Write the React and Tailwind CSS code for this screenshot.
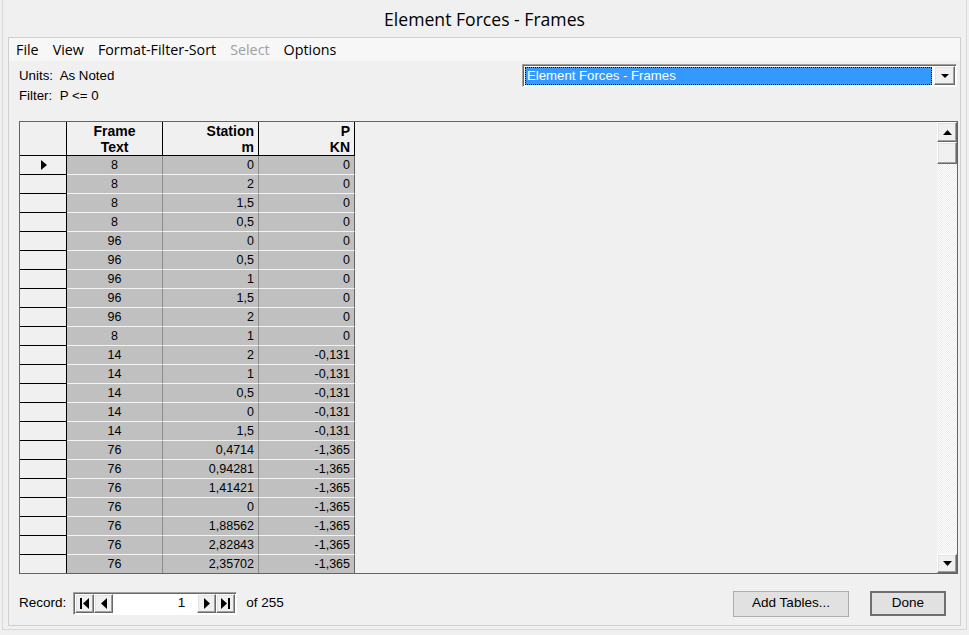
import React from "react";

const rows = [
  ["8", "0", "0"],
  ["8", "2", "0"],
  ["8", "1,5", "0"],
  ["8", "0,5", "0"],
  ["96", "0", "0"],
  ["96", "0,5", "0"],
  ["96", "1", "0"],
  ["96", "1,5", "0"],
  ["96", "2", "0"],
  ["8", "1", "0"],
  ["14", "2", "-0,131"],
  ["14", "1", "-0,131"],
  ["14", "0,5", "-0,131"],
  ["14", "0", "-0,131"],
  ["14", "1,5", "-0,131"],
  ["76", "0,4714", "-1,365"],
  ["76", "0,94281", "-1,365"],
  ["76", "1,41421", "-1,365"],
  ["76", "0", "-1,365"],
  ["76", "1,88562", "-1,365"],
  ["76", "2,82843", "-1,365"],
  ["76", "2,35702", "-1,365"],
];

const btn3d =
  "bg-[#f0f0f0] border border-t-white border-l-white border-b-[#696969] border-r-[#696969] shadow-[inset_-1px_-1px_0_#a0a0a0,inset_1px_1px_0_#e3e3e3]";

function NavBtn({ children }) {
  return (
    <div className={`w-[19px] h-[19px] flex items-center justify-center ${btn3d}`}>
      {children}
    </div>
  );
}

export default function App() {
  return (
    <div
      className="w-[969px] h-[635px] bg-[#f0f0f0] px-[2px] pb-[5px] overflow-hidden text-black"
      style={{ fontFamily: '"Liberation Sans", Arial, sans-serif' }}
    >
      <div className="h-full border-l border-r border-b border-[#d9d9d9] flex flex-col">
        {/* Title */}
        <div className="h-[37px] flex items-center justify-center pt-[1px]">
          <span className="text-[17.6px] font-['Open_Sans',sans-serif]">Element Forces - Frames</span>
        </div>
        {/* Client */}
        <div className="mx-[5px] mb-[3px] flex-1 border border-[#cfcfcf] flex flex-col bg-[#f0f0f0]">
          {/* Menu */}
          <div className="h-[23px] bg-[#f7f7f7] flex items-center font-['Open_Sans',sans-serif] text-[14.3px] pt-[1px]">
            <span className="px-[7px]">File</span>
            <span className="px-[7px]">View</span>
            <span className="px-[7px]">Format-Filter-Sort</span>
            <span className="px-[7px] text-[#a0a0a0]">Select</span>
            <span className="px-[7px]">Options</span>
          </div>
          {/* Info */}
          <div className="h-[60px] flex justify-between">
            <div className="pl-[10px] pt-[5px] text-[13.3px] leading-[20px]">
              <div>Units:&nbsp; As Noted</div>
              <div>Filter:&nbsp; P &lt;= 0</div>
            </div>
            <div className="mt-[3px] mr-[3px] w-[435px] h-[23px] border border-t-[#a0a0a0] border-l-[#a0a0a0] border-b-white border-r-white shadow-[inset_1px_1px_0_#696969] flex items-center pl-[2px] pr-[1px] bg-white">
              <div className="flex-1 h-[18px] bg-[#3399ff] outline outline-1 outline-dotted outline-black -outline-offset-1 flex items-center pl-[2px] text-white text-[13.2px]">
                Element Forces - Frames
              </div>
              <div className={`ml-[2px] w-[21px] h-[19px] flex items-center justify-center ${btn3d}`}>
                <svg width="8" height="4" viewBox="0 0 8 4"><polygon points="0,0 8,0 4,4" fill="#000" /></svg>
              </div>
            </div>
          </div>
          {/* Table */}
          <div className="ml-[10px] mr-[2px] h-[453px] border border-[#646464] flex bg-[#f0f0f0]">
            <div className="flex-1 overflow-hidden">
              {/* Header */}
              <div className="flex h-[34px] text-[14px] font-bold leading-[16px]">
                <div className="w-[47px] border-r border-b border-black" />
                <div className="w-[96px] border-r border-b border-black flex flex-col items-center justify-center">
                  <span>Frame</span>
                  <span>Text</span>
                </div>
                <div className="w-[96px] border-r border-b border-black flex flex-col items-end justify-center pr-[4px]">
                  <span>Station</span>
                  <span>m</span>
                </div>
                <div className="w-[96px] border-r border-b border-black flex flex-col items-end justify-center pr-[4px]">
                  <span>P</span>
                  <span>KN</span>
                </div>
              </div>
              {rows.map((r, i) => (
                <div key={i} className="flex h-[19px] text-[12.5px] leading-[18px]">
                  <div className="w-[47px] border-r border-b border-black bg-[#f0f0f0] flex items-center justify-center">
                    {i === 0 && (
                      <svg width="6" height="10" viewBox="0 0 6 10" className="ml-[2px]">
                        <polygon points="0,0 6,5 0,10" fill="#000" />
                      </svg>
                    )}
                  </div>
                  <div className="w-[96px] border-r border-b border-r-[#8c8c8c] border-b-[#f4f4f4] bg-[#c0c0c0] text-center">
                    {r[0]}
                  </div>
                  <div className="w-[96px] border-r border-b border-r-[#8c8c8c] border-b-[#f4f4f4] bg-[#c0c0c0] text-right pr-[4px]">
                    {r[1]}
                  </div>
                  <div className="w-[96px] border-r border-b border-r-[#646464] border-b-[#f4f4f4] bg-[#c0c0c0] text-right pr-[4px]">
                    {r[2]}
                  </div>
                </div>
              ))}
            </div>
            {/* Scrollbar */}
            <div className="w-[20px] flex flex-col">
              <div className={`h-[20px] flex items-center justify-center ${btn3d}`}>
                <svg width="9" height="5" viewBox="0 0 9 5"><polygon points="0,5 9,5 4.5,0" fill="#000" /></svg>
              </div>
              <div className={`h-[22px] ${btn3d}`} />
              <div className="flex-1 bg-[repeating-conic-gradient(#ffffff_0%_25%,#ebebeb_0%_50%)] bg-[length:2px_2px]" />
              <div className={`h-[19px] flex items-center justify-center ${btn3d}`}>
                <svg width="9" height="5" viewBox="0 0 9 5"><polygon points="0,0 9,0 4.5,5" fill="#000" /></svg>
              </div>
            </div>
          </div>
          {/* Bottom */}
          <div className="flex-1 flex items-center pt-[8px] text-[13.5px]">
            <span className="ml-[10px]">Record:</span>
            <div className="ml-[7px] w-[164px] h-[23px] border border-t-[#a0a0a0] border-l-[#a0a0a0] border-b-white border-r-white shadow-[inset_1px_1px_0_#696969] bg-white flex items-center pl-[1px]">
              <NavBtn>
                <svg width="9" height="11" viewBox="0 0 9 11">
                  <rect x="0" y="0" width="2" height="11" fill="#000" />
                  <polygon points="9,0 9,11 3,5.5" fill="#000" />
                </svg>
              </NavBtn>
              <NavBtn>
                <svg width="6" height="11" viewBox="0 0 6 11"><polygon points="6,0 6,11 0,5.5" fill="#000" /></svg>
              </NavBtn>
              <div className="w-[84px] text-right pr-[12px]">1</div>
              <NavBtn>
                <svg width="6" height="11" viewBox="0 0 6 11"><polygon points="0,0 0,11 6,5.5" fill="#000" /></svg>
              </NavBtn>
              <NavBtn>
                <svg width="9" height="11" viewBox="0 0 9 11">
                  <polygon points="0,0 0,11 6,5.5" fill="#000" />
                  <rect x="7" y="0" width="2" height="11" fill="#000" />
                </svg>
              </NavBtn>
            </div>
            <span className="ml-[9px]">of 255</span>
            <div className="flex-1" />
            <div className="w-[116px] h-[26px] border border-[#adadad] bg-[#e1e1e1] flex items-center justify-center">
              Add Tables...
            </div>
            <div className="ml-[21px] mr-[14px] w-[76px] h-[25px] border-2 border-[#6f6f6f] bg-[#e1e1e1] flex items-center justify-center">
              Done
            </div>
          </div>
        </div>
      </div>
    </div>
  );
}
